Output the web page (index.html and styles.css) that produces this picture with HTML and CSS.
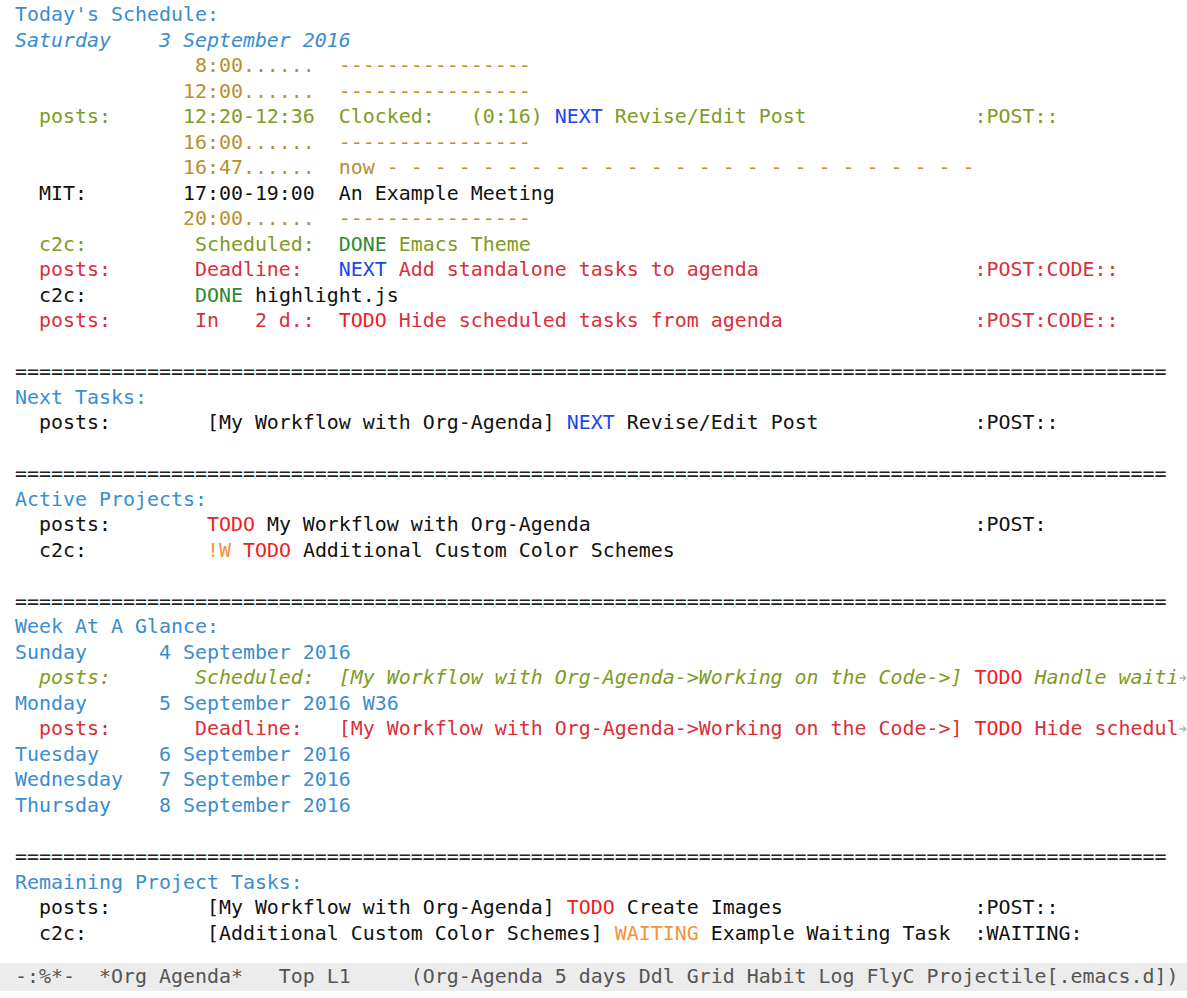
FILE: index.html
```html
<!DOCTYPE html>
<html>
<head>
<meta charset="utf-8">
<link rel="stylesheet" href="styles.css">
</head>
<body>
<div class="frame">
<div class="buffer">
<div class="line hd">Today's Schedule:</div>
<div class="line hd it">Saturday    3 September 2016</div>
<div class="line grid">               8:00......  ----------------</div>
<div class="line grid">              12:00......  ----------------</div>
<div class="line olive">  posts:      12:20-12:36  Clocked:   (0:16) <span class="next">NEXT</span> Revise/Edit Post              :POST::</div>
<div class="line grid">              16:00......  ----------------</div>
<div class="line grid">              16:47......  now - - - - - - - - - - - - - - - - - - - - - - - - -</div>
<div class="line">  MIT:        17:00-19:00  An Example Meeting</div>
<div class="line grid">              20:00......  ----------------</div>
<div class="line olive">  c2c:         Scheduled:  <span class="done">DONE</span> Emacs Theme</div>
<div class="line red">  posts:       Deadline:   <span class="next">NEXT</span> Add standalone tasks to agenda                  :POST:CODE::</div>
<div class="line">  c2c:         <span class="done">DONE</span> highlight.js</div>
<div class="line red">  posts:       In   2 d.:  <span class="todo">TODO</span> Hide scheduled tasks from agenda                :POST:CODE::</div>
<div class="line"> </div>
<div class="line sep">================================================================================================</div>
<div class="line hd">Next Tasks:</div>
<div class="line">  posts:        [My Workflow with Org-Agenda] <span class="next">NEXT</span> Revise/Edit Post             :POST::</div>
<div class="line"> </div>
<div class="line sep">================================================================================================</div>
<div class="line hd">Active Projects:</div>
<div class="line">  posts:        <span class="todo">TODO</span> My Workflow with Org-Agenda                                :POST:</div>
<div class="line">  c2c:          <span class="wait">!W</span> <span class="todo">TODO</span> Additional Custom Color Schemes</div>
<div class="line"> </div>
<div class="line sep">================================================================================================</div>
<div class="line hd">Week At A Glance:</div>
<div class="line hd">Sunday      4 September 2016</div>
<div class="line trunc"><span class="cols olive it">  posts:       Scheduled:  [My Workflow with Org-Agenda-&gt;Working on the Code-&gt;] <span class="todo up">TODO</span> Handle waiti</span><svg class="farrow" width="8" height="10" viewBox="0 0 8 10"><path d="M0.5 5H6.5M4 2.2L6.8 5L4 7.8" fill="none" stroke="#b4b4b4" stroke-width="1.3"/></svg></div>
<div class="line hd">Monday      5 September 2016 W36</div>
<div class="line trunc"><span class="cols red">  posts:       Deadline:   [My Workflow with Org-Agenda-&gt;Working on the Code-&gt;] <span class="todo">TODO</span> Hide schedul</span><svg class="farrow" width="8" height="10" viewBox="0 0 8 10"><path d="M0.5 5H6.5M4 2.2L6.8 5L4 7.8" fill="none" stroke="#b4b4b4" stroke-width="1.3"/></svg></div>
<div class="line hd">Tuesday     6 September 2016</div>
<div class="line hd">Wednesday   7 September 2016</div>
<div class="line hd">Thursday    8 September 2016</div>
<div class="line"> </div>
<div class="line sep">================================================================================================</div>
<div class="line hd">Remaining Project Tasks:</div>
<div class="line">  posts:        [My Workflow with Org-Agenda] <span class="todo">TODO</span> Create Images                :POST::</div>
<div class="line">  c2c:          [Additional Custom Color Schemes] <span class="wait">WAITING</span> Example Waiting Task  :WAITING:</div>
</div>
<div class="modeline">-:%*-  *Org Agenda*   Top L1     (Org-Agenda 5 days Ddl Grid Habit Log FlyC Projectile[.emacs.d])</div>
</div>
</body>
</html>
```
FILE: styles.css
```css
html, body {
  margin: 0;
  padding: 0;
  background: #ffffff;
}

.frame {
  width: 1187px;
  height: 998px;
  display: flex;
  flex-direction: column;
  font-family: "DejaVu Sans Mono", "Liberation Mono", monospace;
  font-size: 19.93px;
  color: #111111;
}

.buffer {
  padding: 2px 0 0 15px;
  height: 960px;
  box-sizing: border-box;
}

.line {
  white-space: pre;
  line-height: 25.53px;
  height: 25.53px;
}

.trunc {
  display: flex;
  align-items: center;
}

.cols {
  display: block;
  white-space: pre;
  flex: none;
}

.farrow {
  flex: none;
  margin-left: 1px;
}

.hd { color: #3a8dcf; }
.it { font-style: italic; }
.up { font-style: normal; }
.grid { color: #b8902c; }
.olive { color: #7e9b24; }
.red { color: #da2f3b; }
.todo { color: #f0201e; }
.next { color: #1d45ef; }
.done { color: #2b8a2f; }
.wait { color: #f6923a; }
.sep { color: #222222; }

.modeline {
  margin-top: 3px;
  height: 28px;
  line-height: 28px;
  background: #ececec;
  color: #555555;
  white-space: pre;
  padding-left: 15px;
}
```
